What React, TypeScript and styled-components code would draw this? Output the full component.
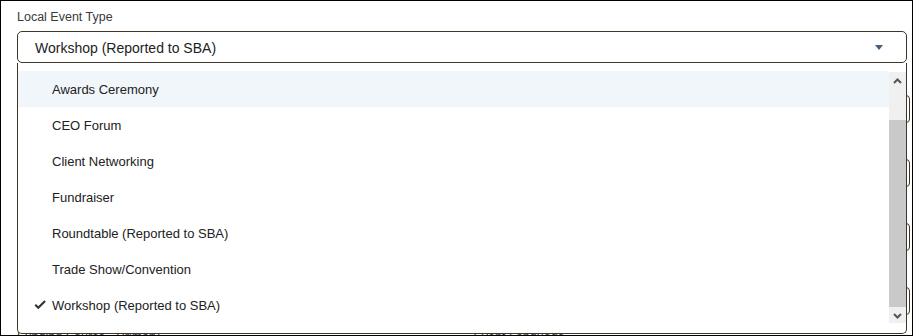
import React from "react";
import styled, { createGlobalStyle } from "styled-components";

const Global = createGlobalStyle`
  html, body { margin: 0; padding: 0; background: #fff; }
  body { font-family: "Liberation Sans", Arial, sans-serif; }
  * { box-sizing: border-box; }
`;

const Frame = styled.div`
  width: 913px;
  height: 336px;
  border: 1px solid #000;
  overflow: hidden;
  padding: 9px 5px 0 16px;
  background: #fff;
`;

const FieldLabel = styled.div`
  font-size: 12.5px;
  line-height: 15px;
  color: #3a3a3a;
  margin-bottom: 6px;
  white-space: nowrap;
`;

const SelectWrap = styled.div`
  position: relative;
  z-index: 2;
`;

const SelectBox = styled.div`
  height: 32px;
  border: 1px solid #3e3628;
  border-radius: 5px;
  display: flex;
  align-items: center;
  justify-content: space-between;
  padding: 1px 23px 0 17px;
  font-size: 14px;
  color: #222;
  background: #fff;
`;

const Caret = styled.span`
  width: 0;
  height: 0;
  border-left: 4px solid transparent;
  border-right: 4px solid transparent;
  border-top: 5px solid #4c5b78;
`;

const Menu = styled.div`
  position: absolute;
  top: 100%;
  left: 0;
  right: 0;
  height: 271px;
  background: #fff;
  border: 1px solid #3e3628;
  border-top: none;
  border-radius: 0 0 5px 5px;
  padding: 8px 17px 9px 0;
`;

const Option = styled.div<{ $active?: boolean }>`
  position: relative;
  height: 36px;
  display: flex;
  align-items: center;
  padding-left: 34px;
  font-size: 13px;
  color: #222;
  background: ${(p) => (p.$active ? "#f1f6fa" : "transparent")};
  white-space: nowrap;
`;

const Check = styled.svg`
  position: absolute;
  left: 16px;
  top: 13px;
`;

const Scrollbar = styled.div`
  position: absolute;
  top: 9px;
  right: 0;
  width: 17px;
  height: 251px;
  background: #f0f0f0;
  display: flex;
  flex-direction: column;
`;

const ScrollBtn = styled.div`
  height: 17px;
  display: flex;
  align-items: center;
  justify-content: center;
  flex: none;
`;

const Track = styled.div`
  flex: 1;
  display: flex;
  flex-direction: column;
  padding-top: 31px;
`;

const Thumb = styled.div`
  height: 187px;
  background: #c9c9c9;
`;

const UnderGrid = styled.div`
  margin-top: 11px;
  margin-right: -3px;
  display: grid;
  grid-template-columns: 1fr 1fr;
  column-gap: 20px;
  row-gap: 15px;
`;

const UnderField = styled.div`
  display: flex;
  flex-direction: column;
`;

const UnderInput = styled.div`
  height: 28px;
  border: 1px solid #3e3628;
  border-radius: 4px;
`;

const Chevron = ({ up }: { up?: boolean }) => (
  <svg width="9" height="6" viewBox="0 0 9 6">
    <path
      d={up ? "M1 5 L4.5 1.5 L8 5" : "M1 1 L4.5 4.5 L8 1"}
      fill="none"
      stroke="#555"
      strokeWidth="2"
    />
  </svg>
);

const options = [
  "Awards Ceremony",
  "CEO Forum",
  "Client Networking",
  "Fundraiser",
  "Roundtable (Reported to SBA)",
  "Trade Show/Convention",
  "Workshop (Reported to SBA)",
];

const underLabels = [
  "Event Name",
  "Event Format",
  "Start Date",
  "End Date",
  "Location",
  "Co-Sponsor",
  "Number of Attendees",
  "Event Duration",
  "Funding Source - Primary",
  "Event Language",
];

export default function App() {
  return (
    <>
      <Global />
      <Frame>
        <FieldLabel>Local Event Type</FieldLabel>
        <SelectWrap>
          <SelectBox>
            <span>Workshop (Reported to SBA)</span>
            <Caret />
          </SelectBox>
          <Menu>
            {options.map((o, i) => (
              <Option key={o} $active={i === 0}>
                {o === "Workshop (Reported to SBA)" && (
                  <Check width="12" height="10" viewBox="0 0 12 10">
                    <path
                      d="M0.5 5.5 L2 4 L4.3 6.3 L10.3 0.3 L11.8 1.8 L4.3 9.3 Z"
                      fill="#333"
                    />
                  </Check>
                )}
                {o}
              </Option>
            ))}
            <Scrollbar>
              <ScrollBtn>
                <Chevron up />
              </ScrollBtn>
              <Track>
                <Thumb />
              </Track>
              <ScrollBtn>
                <Chevron />
              </ScrollBtn>
            </Scrollbar>
          </Menu>
        </SelectWrap>
        <UnderGrid>
          {underLabels.map((l) => (
            <UnderField key={l}>
              <FieldLabel>{l}</FieldLabel>
              <UnderInput />
            </UnderField>
          ))}
        </UnderGrid>
      </Frame>
    </>
  );
}
